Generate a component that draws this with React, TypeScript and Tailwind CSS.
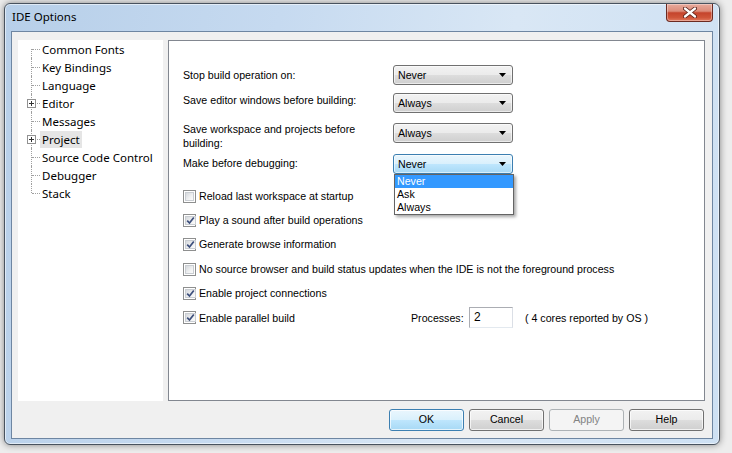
import React from "react";

const treeItems: { label: string; plus?: boolean; selected?: boolean }[] = [
  { label: "Common Fonts" },
  { label: "Key Bindings" },
  { label: "Language" },
  { label: "Editor", plus: true },
  { label: "Messages" },
  { label: "Project", plus: true, selected: true },
  { label: "Source Code Control" },
  { label: "Debugger" },
  { label: "Stack" },
];

function Arrow() {
  return (
    <svg width="7" height="4" viewBox="0 0 7 4" className="shrink-0">
      <path d="M0 0 H7 L3.5 4 Z" fill="#000" />
    </svg>
  );
}

function Combo({ value, focused }: { value: string; focused?: boolean }) {
  return (
    <div
      className={
        focused
          ? "w-[120px] h-[20px] rounded-[3px] border border-[#3c7fb1] bg-[linear-gradient(to_bottom,#eaf6fd_0%,#d9f0fc_50%,#bee6fd_51%,#a7d9f5_100%)] shadow-[inset_0_0_0_1px_rgba(255,255,255,0.6)] flex items-center justify-between pl-[4px] pr-[6px]"
          : "w-[120px] h-[20px] rounded-[3px] border border-[#707070] bg-[linear-gradient(to_bottom,#f2f2f2_0%,#ebebeb_50%,#dddddd_51%,#cfcfcf_100%)] shadow-[inset_0_0_0_1px_rgba(255,255,255,0.6)] flex items-center justify-between pl-[4px] pr-[6px]"
      }
    >
      <span className="leading-[14px]">{value}</span>
      <Arrow />
    </div>
  );
}

function Check({ checked }: { checked?: boolean }) {
  return (
    <span className="w-[13px] h-[13px] border border-[#8e8f8f] bg-white p-[1px] shrink-0 flex">
      <span className="flex-1 border border-[#c9cdd2] bg-[linear-gradient(135deg,#d6d9dd_0%,#f0f1f2_60%,#fbfbfb_100%)] flex items-center justify-center">
        {checked && (
          <svg width="9" height="9" viewBox="0 0 9 9">
            <path d="M1.2 4.6 L3.5 7 L7.8 1.4" fill="none" stroke="#3d4f7c" strokeWidth="1.7" />
          </svg>
        )}
      </span>
    </span>
  );
}

function CheckRow({ label, checked, className }: { label: string; checked?: boolean; className: string }) {
  return (
    <div className={className}>
      <Check checked={checked} />
      <span className="ml-[3px] leading-[14px] whitespace-nowrap">{label}</span>
    </div>
  );
}

function Btn({ children, kind }: { children: React.ReactNode; kind: "default" | "normal" | "disabled" }) {
  const cls =
    kind === "default"
      ? "w-[75px] h-[22px] rounded-[3px] border border-[#3c7fb1] bg-[linear-gradient(to_bottom,#eaf6fd_0%,#d9f0fc_50%,#bee6fd_51%,#a7d9f5_100%)] shadow-[inset_0_0_0_1px_rgba(255,255,255,0.7)] flex items-center justify-center text-black"
      : kind === "normal"
      ? "w-[75px] h-[22px] rounded-[3px] border border-[#707070] bg-[linear-gradient(to_bottom,#f2f2f2_0%,#ebebeb_50%,#dddddd_51%,#cfcfcf_100%)] shadow-[inset_0_0_0_1px_rgba(255,255,255,0.7)] flex items-center justify-center text-black"
      : "w-[75px] h-[22px] rounded-[3px] border border-[#adb2b5] bg-[#f4f4f4] flex items-center justify-center text-[#838383]";
  return <div className={cls}>{children}</div>;
}

function TreeRow({ item, index, count }: { item: (typeof treeItems)[number]; index: number; count: number }) {
  const first = index === 0;
  const last = index === count - 1;
  return (
    <div className="flex h-[18px] items-center">
      <div className="relative w-[22px] h-full shrink-0">
        <span
          className={
            first
              ? "absolute left-[13px] top-[9px] bottom-0 w-0 border-l border-dotted border-[#a0a0a0]"
              : last
              ? "absolute left-[13px] top-0 h-[9px] w-0 border-l border-dotted border-[#a0a0a0]"
              : "absolute left-[13px] top-0 bottom-0 w-0 border-l border-dotted border-[#a0a0a0]"
          }
        />
        <span className="absolute left-[14px] top-[9px] w-[8px] h-0 border-t border-dotted border-[#a0a0a0]" />
        {item.plus && (
          <span className="absolute left-[9px] top-[5px] w-[9px] h-[9px] border border-[#919191] bg-white flex items-center justify-center">
            <svg width="7" height="7" viewBox="0 0 7 7">
              <path d="M1 3.5 H6 M3.5 1 V6" stroke="#333" strokeWidth="1" />
            </svg>
          </span>
        )}
      </div>
      <span
        className={
          item.selected
            ? "px-[2px] h-[17px] leading-[17px] bg-[#e5e5e5] whitespace-nowrap"
            : "px-[2px] h-[17px] leading-[17px] whitespace-nowrap"
        }
      >
        {item.label}
      </span>
    </div>
  );
}

export default function App() {
  return (
    <div className="w-[732px] h-[453px] bg-[#ededed] overflow-hidden pt-[3px] pl-[4px]">
      <div className="w-[716px] h-[442px] rounded-[6px] border border-[#48525e] bg-[linear-gradient(100deg,#b7cfe9_0%,#c6daf0_35%,#d9e7f5_65%,#cde0f3_100%)] shadow-[inset_0_0_0_1px_rgba(255,255,255,0.55),0_0_7px_rgba(0,0,0,0.45)] flex flex-col">
        <div className="h-[27px] flex items-start justify-between shrink-0">
          <span className="pl-[7px] pt-[5px] text-[11.5px] leading-[16px] text-black font-['Noto_Sans',sans-serif]">
            IDE Options
          </span>
          <div className="mr-[6px] w-[47px] h-[18px] rounded-b-[4px] border border-t-0 border-[#6b2a22] bg-[linear-gradient(to_bottom,#e8aa9c_0%,#dc8c7a_42%,#c5442c_52%,#cf5539_80%,#e27b60_100%)] shadow-[inset_0_0_0_1px_rgba(255,255,255,0.35)] flex items-center justify-center">
            <svg width="14" height="11" viewBox="0 0 14 11">
              <path d="M2 1.5 L12 9.5 M12 1.5 L2 9.5" stroke="#5a2018" strokeWidth="4" strokeLinecap="round" />
              <path d="M2 1.5 L12 9.5 M12 1.5 L2 9.5" stroke="#ffffff" strokeWidth="2.3" strokeLinecap="round" />
            </svg>
          </div>
        </div>
        <div className="mx-[6px] h-[408px] border border-[#6e86a2] bg-[#f0f0f0] flex flex-col text-[10.65px] text-black font-['Liberation_Sans',Arial,sans-serif]">
          <div className="flex h-[361px] mt-[8px] pl-[6px] gap-[5px]">
            <div className="w-[145px] bg-white text-[11.5px] font-['Noto_Sans',sans-serif] text-black">
              {treeItems.map((it, i) => (
                <TreeRow key={it.label} item={it} index={i} count={treeItems.length} />
              ))}
            </div>
            <div className="w-[537px] border border-[#828790] bg-white flex flex-col pl-[14px]">
              <div className="flex mt-[24px] h-[20px]">
                <div className="w-[210px] pt-[3px] leading-[14px]">Stop build operation on:</div>
                <Combo value="Never" />
              </div>
              <div className="flex mt-[8px] h-[20px]">
                <div className="w-[210px] pt-[0px] leading-[14px]">Save editor windows before building:</div>
                <Combo value="Always" />
              </div>
              <div className="flex mt-[8px] h-[29px]">
                <div className="w-[210px] pt-[1px] leading-[14px]">
                  Save workspace and projects before
                  <br />
                  building:
                </div>
                <div className="mt-[2px]">
                  <Combo value="Always" />
                </div>
              </div>
              <div className="flex mt-[4px] h-[20px]">
                <div className="w-[210px] pt-[2px] leading-[14px]">Make before debugging:</div>
                <div className="relative">
                  <Combo value="Never" focused />
                  <div className="absolute left-[1px] top-full w-[120px] border border-[#646464] bg-white shadow-[2px_2px_3px_rgba(0,0,0,0.35)] z-10">
                    <div className="h-[13px] leading-[13px] pl-[2px] bg-[#3399ff] text-white">Never</div>
                    <div className="h-[13px] leading-[13px] pl-[2px]">Ask</div>
                    <div className="h-[13px] leading-[13px] pl-[2px]">Always</div>
                  </div>
                </div>
              </div>
              <CheckRow className="flex items-center h-[20px] mt-[12px]" label="Reload last workspace at startup" />
              <CheckRow className="flex items-center h-[20px] mt-[4px]" label="Play a sound after build operations" checked />
              <CheckRow className="flex items-center h-[20px] mt-[4px]" label="Generate browse information" checked />
              <CheckRow
                className="flex items-center h-[20px] mt-[5px]"
                label="No source browser and build status updates when the IDE is not the foreground process"
              />
              <CheckRow className="flex items-center h-[20px] mt-[4px]" label="Enable project connections" checked />
              <div className="flex items-center h-[21px] mt-[4px]">
                <CheckRow className="flex items-center w-[228px]" label="Enable parallel build" checked />
                <span className="w-[58px] leading-[14px]">Processes:</span>
                <div className="w-[44px] h-[21px] border border-[#abadb3] border-b-[#e3e9ef] border-r-[#dbdfe6] bg-white pl-[4px] text-[12px] leading-[18px]">
                  2
                </div>
                <span className="ml-[12px] leading-[14px]">( 4 cores reported by OS )</span>
              </div>
            </div>
          </div>
          <div className="flex justify-end gap-[5px] pr-[8px] mt-[8px]">
            <Btn kind="default">OK</Btn>
            <Btn kind="normal">Cancel</Btn>
            <Btn kind="disabled">Apply</Btn>
            <Btn kind="normal">Help</Btn>
          </div>
        </div>
      </div>
    </div>
  );
}
